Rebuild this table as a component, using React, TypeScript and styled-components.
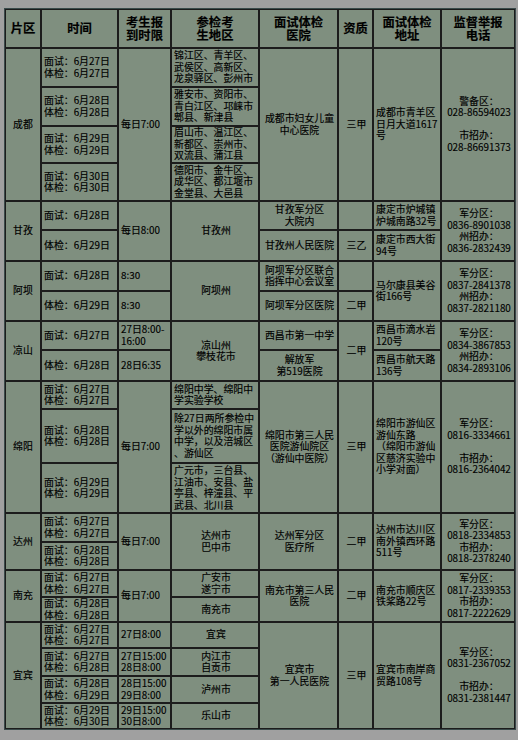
import { FC, ReactNode } from 'react';
import styled, { createGlobalStyle } from 'styled-components';

const GlobalStyle = createGlobalStyle`
  html, body {
    margin: 0;
    padding: 0;
    background: #a0a0a0;
  }
`;

const Page = styled.div`
  width: 518px;
  height: 740px;
  padding: 8px 0 0 4px;
  box-sizing: border-box;
  background: #a0a0a0;
  overflow: hidden;
`;

const Table = styled.table`
  width: 510px;
  table-layout: fixed;
  border-collapse: separate;
  border-spacing: 0;
  background: #7f8f7f;
  border: 1px solid #3a4a4a;
  font-family: 'Noto Sans CJK SC', 'Noto Sans', sans-serif;
  font-size: 9.9px;
  line-height: 11.5px;
  color: #000;
  -webkit-text-stroke: 0.15px #000;
`;

const Col = styled.col<{ $w: number }>`
  width: ${p => p.$w}px;
`;

const Row = styled.tr<{ $h: number }>`
  height: ${p => p.$h}px;
`;

const Head = styled.th`
  border: 1px solid #1c1c1c;
  padding: 0;
  font-size: 12.3px;
  line-height: 13px;
  font-weight: bold;
  text-align: center;
  vertical-align: middle;
  white-space: pre;
`;

const Cell = styled.td<{ $left?: boolean; $tall?: boolean }>`
  border: 1px solid #1c1c1c;
  padding: 0 0 0 2px;
  text-align: ${p => (p.$left ? 'left' : 'center')};
  line-height: ${p => (p.$tall ? '11.6px' : '11.5px')};
  vertical-align: middle;
  white-space: pre;
  overflow: visible;
`;

const Area = styled(Cell)`
  text-align: center;
  padding: 0;
`;

const Date2: FC<{ a: string; b: string }> = ({ a, b }) => (
  <Cell $left>{`面试：6月${a}日\n体检：6月${b}日`}</Cell>
);

const Phone: FC<{ rows: number; children: ReactNode }> = ({ rows, children }) => (
  <Cell rowSpan={rows}>{children}</Cell>
);

export default function App() {
  return (
    <Page>
      <GlobalStyle />
      <Table>
        <colgroup>
          <Col $w={36} />
          <Col $w={77} />
          <Col $w={53} />
          <Col $w={88} />
          <Col $w={79} />
          <Col $w={35} />
          <Col $w={68} />
          <Col $w={74} />
        </colgroup>
        <thead>
          <Row $h={39}>
            <Head>片区</Head>
            <Head>时间</Head>
            <Head>{'考生报\n到时限'}</Head>
            <Head>{'参检考\n生地区'}</Head>
            <Head>{'面试体检\n医院'}</Head>
            <Head>资质</Head>
            <Head>{'面试体检\n地址'}</Head>
            <Head>{'监督举报\n电话'}</Head>
          </Row>
        </thead>
        <tbody>
          {/* 成都 */}
          <Row $h={39}>
            <Area rowSpan={4}>成都</Area>
            <Date2 a="27" b="27" />
            <Cell $left rowSpan={4}>每日7:00</Cell>
            <Cell $left $tall>{'锦江区、青羊区、\n武侯区、高新区、\n龙泉驿区、彭州市'}</Cell>
            <Cell rowSpan={4}>{'成都市妇女儿童\n中心医院'}</Cell>
            <Cell rowSpan={4}>三甲</Cell>
            <Cell $left rowSpan={4}>{'成都市青羊区\n日月大道1617\n号'}</Cell>
            <Phone rows={4}>{'警备区：\n028-86594023\n\n市招办：\n028-86691373'}</Phone>
          </Row>
          <Row $h={39}>
            <Date2 a="28" b="28" />
            <Cell $left $tall>{'雅安市、资阳市、\n青白江区、邛崃市\n郫县、新津县'}</Cell>
          </Row>
          <Row $h={37}>
            <Date2 a="29" b="29" />
            <Cell $left $tall>{'眉山市、温江区、\n新都区、崇州市、\n双流县、蒲江县'}</Cell>
          </Row>
          <Row $h={38}>
            <Date2 a="30" b="30" />
            <Cell $left $tall>{'德阳市、金牛区、\n成华区、都江堰市\n金堂县、大邑县'}</Cell>
          </Row>

          {/* 甘孜 */}
          <Row $h={29}>
            <Area rowSpan={2}>甘孜</Area>
            <Cell $left>面试：6月28日</Cell>
            <Cell $left rowSpan={2}>每日8:00</Cell>
            <Cell rowSpan={2}>甘孜州</Cell>
            <Cell>{'甘孜军分区\n大院内'}</Cell>
            <Cell />
            <Cell $left>{'康定市炉城镇\n炉城南路32号'}</Cell>
            <Phone rows={2}>{'军分区：\n0836-8901038\n州招办：\n0836-2832439'}</Phone>
          </Row>
          <Row $h={31}>
            <Cell $left>体检：6月29日</Cell>
            <Cell>甘孜州人民医院</Cell>
            <Cell>三乙</Cell>
            <Cell $left>{'康定市西大街\n94号'}</Cell>
          </Row>

          {/* 阿坝 */}
          <Row $h={30}>
            <Area rowSpan={2}>阿坝</Area>
            <Cell $left>面试：6月28日</Cell>
            <Cell $left>8:30</Cell>
            <Cell rowSpan={2}>阿坝州</Cell>
            <Cell>{'阿坝军分区联合\n指挥中心会议室'}</Cell>
            <Cell />
            <Cell $left rowSpan={2}>{'马尔康县美谷\n街166号'}</Cell>
            <Phone rows={2}>{'军分区：\n0837-2841378\n州招办：\n0837-2821180'}</Phone>
          </Row>
          <Row $h={30}>
            <Cell $left>体检：6月29日</Cell>
            <Cell $left>8:30</Cell>
            <Cell>阿坝军分区医院</Cell>
            <Cell>二甲</Cell>
          </Row>

          {/* 凉山 */}
          <Row $h={29}>
            <Area rowSpan={2}>凉山</Area>
            <Cell $left>面试：6月27日</Cell>
            <Cell $left>{'27日8:00-\n16:00'}</Cell>
            <Cell rowSpan={2}>{'凉山州\n攀枝花市'}</Cell>
            <Cell>西昌市第一中学</Cell>
            <Cell rowSpan={2}>二甲</Cell>
            <Cell $left>{'西昌市滴水岩\n120号'}</Cell>
            <Phone rows={2}>{'军分区：\n0834-3867853\n州招办：\n0834-2893106'}</Phone>
          </Row>
          <Row $h={31}>
            <Cell $left>体检：6月28日</Cell>
            <Cell $left>28日6:35</Cell>
            <Cell>{'解放军\n第519医院'}</Cell>
            <Cell $left>{'西昌市航天路\n136号'}</Cell>
          </Row>

          {/* 绵阳 */}
          <Row $h={28}>
            <Area rowSpan={3}>绵阳</Area>
            <Date2 a="27" b="27" />
            <Cell $left rowSpan={3}>每日7:00</Cell>
            <Cell $left>{'绵阳中学、绵阳中\n学实验学校'}</Cell>
            <Cell rowSpan={3} $tall>{'绵阳市第三人民\n医院游仙院区\n（游仙中医院）'}</Cell>
            <Cell rowSpan={3}>三甲</Cell>
            <Cell $left rowSpan={3}>
              {'绵阳市游仙区\n游仙东路\n（绵阳市游仙\n区慈济实验中\n小学对面）'}
            </Cell>
            <Phone rows={3}>{'军分区：\n0816-3334661\n\n市招办：\n0816-2364042'}</Phone>
          </Row>
          <Row $h={54}>
            <Date2 a="28" b="28" />
            <Cell $left>{'除27日两所参检中\n学以外的绵阳市属\n中学，以及涪城区\n、游仙区'}</Cell>
          </Row>
          <Row $h={50}>
            <Date2 a="29" b="29" />
            <Cell $left>{'广元市，三台县、\n江油市、安县、盐\n亭县、梓潼县、平\n武县、北川县'}</Cell>
          </Row>

          {/* 达州 */}
          <Row $h={29}>
            <Area rowSpan={2}>达州</Area>
            <Date2 a="27" b="27" />
            <Cell $left rowSpan={2}>每日7:00</Cell>
            <Cell rowSpan={2}>{'达州市\n巴中市'}</Cell>
            <Cell rowSpan={2}>{'达州军分区\n医疗所'}</Cell>
            <Cell rowSpan={2}>二甲</Cell>
            <Cell $left rowSpan={2}>{'达州市达川区\n南外镇西环路\n511号'}</Cell>
            <Phone rows={2}>{'军分区：\n0818-2334853\n市招办：\n0818-2378240'}</Phone>
          </Row>
          <Row $h={28}>
            <Date2 a="28" b="28" />
          </Row>

          {/* 南充 */}
          <Row $h={27}>
            <Area rowSpan={2}>南充</Area>
            <Date2 a="27" b="27" />
            <Cell $left rowSpan={2}>每日7:00</Cell>
            <Cell>{'广安市\n遂宁市'}</Cell>
            <Cell rowSpan={2}>{'南充市第三人民\n医院'}</Cell>
            <Cell rowSpan={2}>二甲</Cell>
            <Cell $left rowSpan={2}>{'南充市顺庆区\n铁桨路22号'}</Cell>
            <Phone rows={2}>{'军分区：\n0817-2339353\n市招办：\n0817-2222629'}</Phone>
          </Row>
          <Row $h={25}>
            <Date2 a="28" b="28" />
            <Cell>南充市</Cell>
          </Row>

          {/* 宜宾 */}
          <Row $h={26}>
            <Area rowSpan={4}>宜宾</Area>
            <Date2 a="27" b="27" />
            <Cell $left>27日8:00</Cell>
            <Cell>宜宾</Cell>
            <Cell rowSpan={4}>{'宜宾市\n第一人民医院'}</Cell>
            <Cell rowSpan={4}>三甲</Cell>
            <Cell $left rowSpan={4}>{'宜宾市南岸商\n贸路108号'}</Cell>
            <Phone rows={4}>{'军分区：\n0831-2367052\n\n市招办：\n0831-2381447'}</Phone>
          </Row>
          <Row $h={28}>
            <Date2 a="27" b="28" />
            <Cell $left>{'27日15:00\n28日8:00'}</Cell>
            <Cell>{'内江市\n自贡市'}</Cell>
          </Row>
          <Row $h={27}>
            <Date2 a="28" b="29" />
            <Cell $left>{'28日15:00\n29日8:00'}</Cell>
            <Cell>泸州市</Cell>
          </Row>
          <Row $h={26}>
            <Date2 a="29" b="30" />
            <Cell $left>{'29日15:00\n30日8:00'}</Cell>
            <Cell>乐山市</Cell>
          </Row>
        </tbody>
      </Table>
    </Page>
  );
}
